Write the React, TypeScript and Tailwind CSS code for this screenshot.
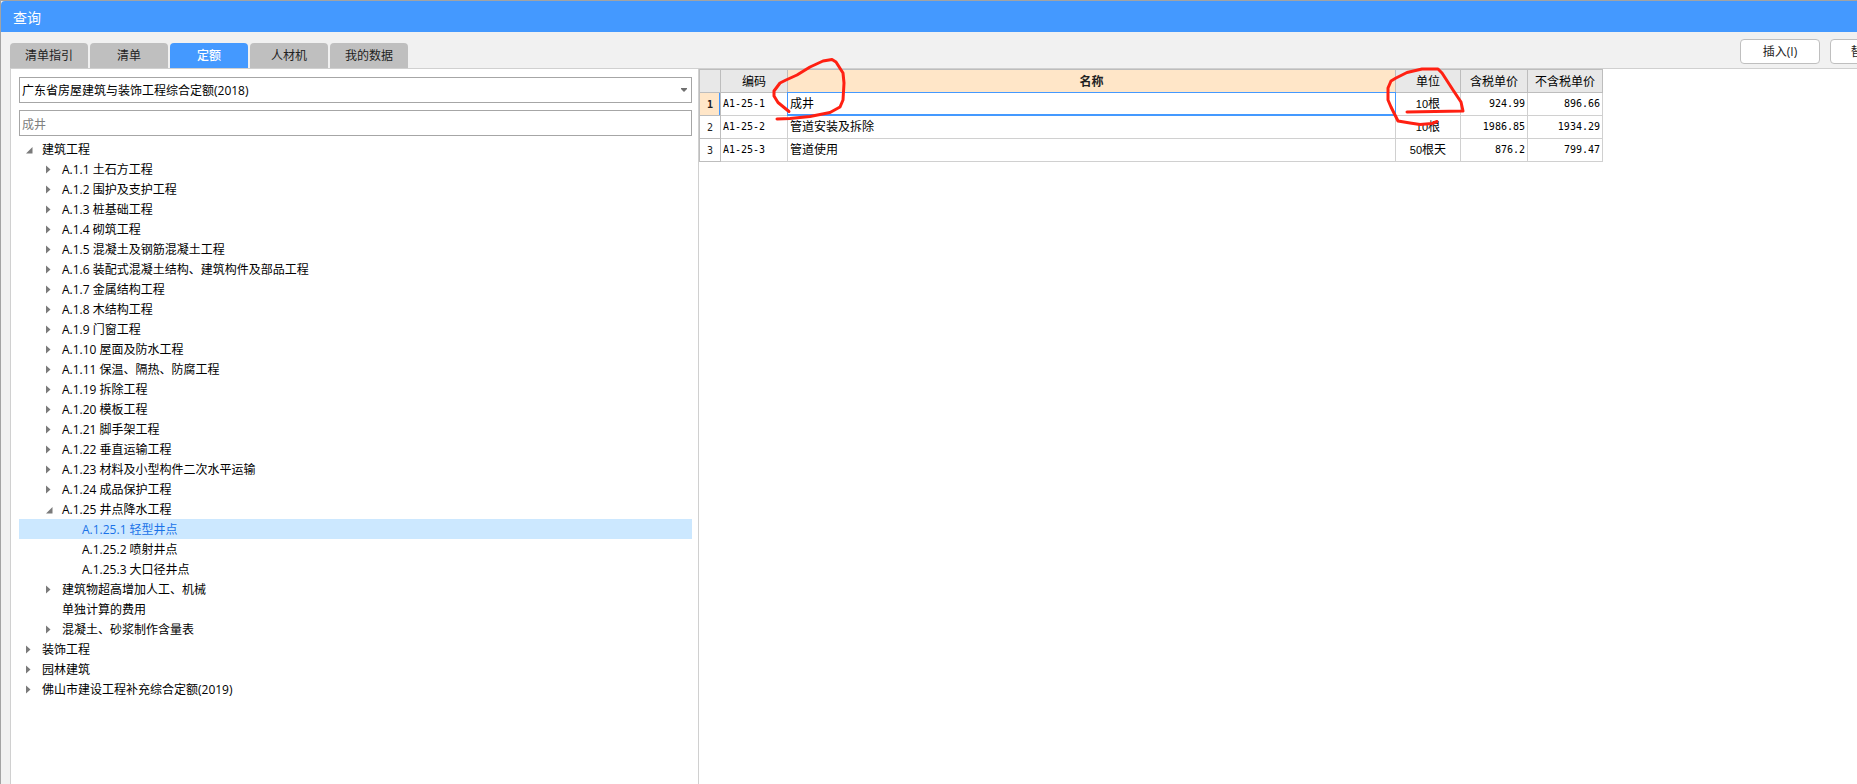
import { useState } from "react"

type TreeItem = {
  label: string
  level: 0 | 1 | 2
  state?: "open" | "closed"
}

const tabs = ["清单指引", "清单", "定额", "人材机", "我的数据"]

const treeItems: TreeItem[] = [
  { label: "建筑工程", level: 0, state: "open" },
  { label: "A.1.1 土石方工程", level: 1, state: "closed" },
  { label: "A.1.2 围护及支护工程", level: 1, state: "closed" },
  { label: "A.1.3 桩基础工程", level: 1, state: "closed" },
  { label: "A.1.4 砌筑工程", level: 1, state: "closed" },
  { label: "A.1.5 混凝土及钢筋混凝土工程", level: 1, state: "closed" },
  { label: "A.1.6 装配式混凝土结构、建筑构件及部品工程", level: 1, state: "closed" },
  { label: "A.1.7 金属结构工程", level: 1, state: "closed" },
  { label: "A.1.8 木结构工程", level: 1, state: "closed" },
  { label: "A.1.9 门窗工程", level: 1, state: "closed" },
  { label: "A.1.10 屋面及防水工程", level: 1, state: "closed" },
  { label: "A.1.11 保温、隔热、防腐工程", level: 1, state: "closed" },
  { label: "A.1.19 拆除工程", level: 1, state: "closed" },
  { label: "A.1.20 模板工程", level: 1, state: "closed" },
  { label: "A.1.21 脚手架工程", level: 1, state: "closed" },
  { label: "A.1.22 垂直运输工程", level: 1, state: "closed" },
  { label: "A.1.23 材料及小型构件二次水平运输", level: 1, state: "closed" },
  { label: "A.1.24 成品保护工程", level: 1, state: "closed" },
  { label: "A.1.25 井点降水工程", level: 1, state: "open" },
  { label: "A.1.25.1 轻型井点", level: 2 },
  { label: "A.1.25.2 喷射井点", level: 2 },
  { label: "A.1.25.3 大口径井点", level: 2 },
  { label: "建筑物超高增加人工、机械", level: 1, state: "closed" },
  { label: "单独计算的费用", level: 1 },
  { label: "混凝土、砂浆制作含量表", level: 1, state: "closed" },
  { label: "装饰工程", level: 0, state: "closed" },
  { label: "园林建筑", level: 0, state: "closed" },
  { label: "佛山市建设工程补充综合定额(2019)", level: 0, state: "closed" },
]

const rows = [
  { code: "A1-25-1", name: "成井", qty: "10", unit: "根", taxed: "924.99", untaxed: "896.66" },
  { code: "A1-25-2", name: "管道安装及拆除", qty: "10", unit: "根", taxed: "1986.85", untaxed: "1934.29" },
  { code: "A1-25-3", name: "管道使用", qty: "50", unit: "根天", taxed: "876.2", untaxed: "799.47" },
]

const indent = {
  0: "pl-[7px]",
  1: "pl-[27px]",
  2: "pl-[47px]",
}

const mono = "font-['DejaVu_Sans_Mono',monospace] text-[10px]"

function TreeArrow({ state }: { state?: "open" | "closed" }) {
  return (
    <svg viewBox="0 0 16 20" className="h-5 w-4 shrink-0 fill-[#7a7a7a]" aria-hidden="true">
      {state === "open" && <path d="M6.5 8V14.5H0Z" />}
      {state === "closed" && <path d="M0 6.5L4.5 10.5L0 14.5Z" />}
    </svg>
  )
}

function Tree() {
  const [selected, setSelected] = useState("A.1.25.1 轻型井点")

  return (
    <ul className="mt-[3px]">
      {treeItems.map((item) => (
        <li key={item.label}>
          <button
            type="button"
            onClick={() => setSelected(item.label)}
            className={`flex h-5 w-full items-center whitespace-nowrap text-left ${indent[item.level]} ${
              selected === item.label ? "bg-[#cce8ff] text-[#1a73e8]" : ""
            }`}
          >
            <TreeArrow state={item.state} />
            <span className="pt-[2px]">{item.label}</span>
          </button>
        </li>
      ))}
    </ul>
  )
}

function RedMarks() {
  return (
    <svg
      className="pointer-events-none absolute left-0 top-0 h-full w-full overflow-visible"
      fill="none"
      stroke="#ff2012"
      strokeWidth="3"
      strokeLinecap="round"
      strokeLinejoin="round"
      aria-hidden="true"
    >
      <path d="M90 42.5L79 33.5L75 27V22L81 14L87 11L98 6L111 -2L124 -8L133 -9.5L137 -7L144 4L145 14L144 31L141 38L131 43.5L111 47.5L91 49.5L78 50" />
      <path d="M738 52.5L733 54.5L721 55.5L711 54L699 52L692 38L689 31V19L692 12L697 9L708 3.5L723 0L739 0L743 4L754 21L762 33L764 42L708 43" />
    </svg>
  )
}

function QuotaTable() {
  const head = "h-[23px] border border-[#bdbdbd] bg-[#e8e8e8] px-0 pb-0 pt-[2px] font-normal"
  const cell = "h-[23px] border border-[#d0d0d0] p-0"

  return (
    <div className="relative w-[904px]">
      <table className="w-full table-fixed border-collapse leading-4">
        <colgroup>
          <col className="w-[21px]" />
          <col className="w-[67px]" />
          <col />
          <col className="w-[65px]" />
          <col className="w-[67px]" />
          <col className="w-[75px]" />
        </colgroup>
        <thead>
          <tr>
            <th className={head} aria-label="序号" />
            <th className={head}>编码</th>
            <th className="h-[23px] border border-[#bdbdbd] bg-[#ffe6c8] px-0 pb-0 pt-[2px] font-bold text-[#222]">
              名称
            </th>
            <th className={head}>单位</th>
            <th className={head}>含税单价</th>
            <th className={head}>不含税单价</th>
          </tr>
        </thead>
        <tbody>
          {rows.map((row, index) => {
            const active = index === 0

            return (
              <tr key={row.code}>
                <th
                  scope="row"
                  className={`h-[23px] border border-[#bdbdbd] px-0 pb-0 pt-[2px] text-[#222] ${mono} ${
                    active ? "bg-[#ffe6c8] font-bold shadow-[inset_-1px_0_0_#4499ff]" : "font-normal"
                  }`}
                >
                  {index + 1}
                </th>
                <td className={`${cell} pl-[2px] ${mono}`}>{row.code}</td>
                <td className={`${cell} relative pl-[2px]`}>
                  {row.name}
                  {active && <span className="absolute -inset-px border border-b-2 border-[#4499ff]" />}
                </td>
                <td className={`${cell} text-center`}>
                  <span className="font-['Liberation_Sans',sans-serif] text-[11px]">{row.qty}</span>
                  {row.unit}
                </td>
                <td className={`${cell} pr-[2px] text-right ${mono}`}>{row.taxed}</td>
                <td className={`${cell} pr-[2px] text-right ${mono}`}>{row.untaxed}</td>
              </tr>
            )
          })}
        </tbody>
      </table>
      <RedMarks />
    </div>
  )
}

export default function App() {
  const [activeTab, setActiveTab] = useState("定额")

  return (
    <div className="flex min-h-screen flex-col overflow-hidden border-l border-t border-[#a3a3a3] bg-[#f1f1f1] font-['Open_Sans','Noto_Sans_CJK_SC',sans-serif] text-xs text-black">
      <header className="flex h-[31px] items-center rounded-tl-sm bg-[#4499ff] pl-3 pt-[2px]">
        <h1 className="text-sm text-white">查询</h1>
      </header>

      <div className="flex h-9 justify-between pl-[9px]">
        <nav className="flex items-end gap-[2px]">
          {tabs.map((tab) => (
            <button
              key={tab}
              type="button"
              onClick={() => setActiveTab(tab)}
              className={`h-[25px] w-[78px] rounded-t-sm pt-px ${
                activeTab === tab ? "bg-[#4499ff] font-medium text-white" : "bg-[#bfbfbf] text-[#222]"
              }`}
            >
              {tab}
            </button>
          ))}
        </nav>
        <div className="flex w-[117px] gap-[10px] overflow-hidden pt-[7px]">
          <button type="button" className="h-[25px] w-20 shrink-0 rounded-sm border border-[#bfbfbf] bg-white text-[#222]">
            插入(I)
          </button>
          <button type="button" className="h-[25px] w-20 shrink-0 rounded-sm border border-[#bfbfbf] bg-white text-[#222]">
            替换(R)
          </button>
        </div>
      </div>

      <main className="ml-[9px] flex flex-1 border-l border-t border-[#d0d0d0] bg-white">
        <aside className="w-[688px] shrink-0 border-r border-[#d0d0d0] pl-2 pr-[6px] pt-2">
          <div className="relative">
            <select
              aria-label="定额库"
              className="block h-[26px] w-full appearance-none border border-[#a6a6a6] bg-white pl-[2px] pt-[2px]"
            >
              <option>广东省房屋建筑与装饰工程综合定额(2018)</option>
            </select>
            <svg viewBox="0 0 6 4" className="pointer-events-none absolute right-[5px] top-[11px] h-1 w-1.5 fill-[#6f6f6f]" aria-hidden="true">
              <path d="M0 0H6V1L3 4L0 1Z" />
            </svg>
          </div>
          <input
            type="text"
            aria-label="搜索"
            defaultValue="成井"
            className="mt-[7px] block h-[26px] w-full border border-[#a6a6a6] pl-[2px] pt-px text-[#808080]"
          />
          <Tree />
        </aside>
        <section className="min-w-0 flex-1">
          <QuotaTable />
        </section>
      </main>
    </div>
  )
}
